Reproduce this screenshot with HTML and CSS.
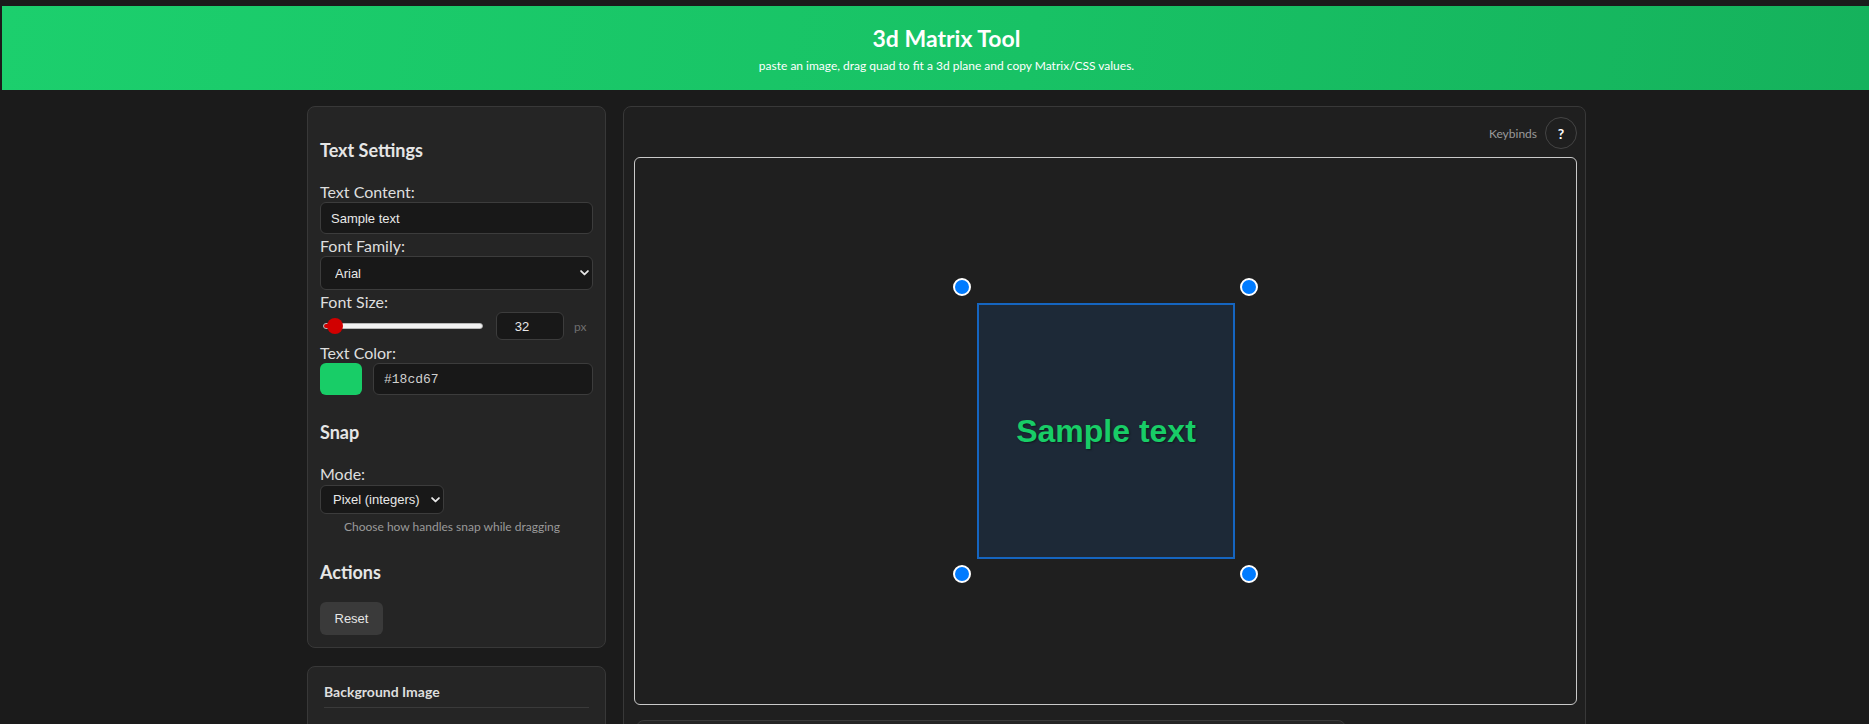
FILE: index.html
```html
<!DOCTYPE html>
<html lang="en">
<head>
<meta charset="utf-8">
<title>3d Matrix Tool</title>
<link rel="stylesheet" href="styles.css">
</head>
<body>
<header class="app-header">
  <h1 class="app-title">3d Matrix Tool</h1>
  <p class="app-subtitle">paste an image, drag quad to fit a 3d plane and copy Matrix/CSS values.</p>
</header>
<div class="layout-wrap">
  <main class="layout">
    <aside class="sidebar">
      <section class="panel settings">
        <h3 class="section-title first">Text Settings</h3>
        <label class="field-label" for="text-content">Text Content:</label>
        <input id="text-content" class="text-input" type="text" value="Sample text">

        <label class="field-label spaced" for="font-family">Font Family:</label>
        <div class="select-wrap full">
          <select id="font-family" class="select"><option>Arial</option></select>
          <svg class="chevron" viewBox="0 0 10 7" aria-hidden="true"><path d="M1.2 1.3 L5 5.1 L8.8 1.3" fill="none" stroke="#e6e6e6" stroke-width="2" stroke-linecap="round" stroke-linejoin="round"/></svg>
        </div>

        <label class="field-label spaced" for="font-size">Font Size:</label>
        <div class="size-row">
          <input id="font-size" class="range" type="range" min="10" max="1000" value="32">
          <input class="num-input" type="text" value="32">
          <span class="unit">px</span>
        </div>

        <label class="field-label spaced3" for="text-color">Text Color:</label>
        <div class="color-row">
          <span class="swatch"></span>
          <input id="text-color" class="text-input mono" type="text" value="#18cd67">
        </div>

        <h3 class="section-title">Snap</h3>
        <label class="field-label" for="snap-mode">Mode:</label>
        <div class="select-wrap compact">
          <select id="snap-mode" class="select"><option>Pixel (integers)</option></select>
          <svg class="chevron" viewBox="0 0 10 7" aria-hidden="true"><path d="M1.2 1.3 L5 5.1 L8.8 1.3" fill="none" stroke="#e6e6e6" stroke-width="2" stroke-linecap="round" stroke-linejoin="round"/></svg>
        </div>
        <p class="hint">Choose how handles snap while dragging</p>

        <h3 class="section-title actions-title">Actions</h3>
        <button class="btn" type="button">Reset</button>
      </section>

      <section class="panel bg-panel">
        <h4 class="sub-title">Background Image</h4>
      </section>
    </aside>

    <section class="workspace">
      <div class="toolbar">
        <span class="keybinds-label">Keybinds</span>
        <button class="help-btn" type="button">?</button>
      </div>
      <div class="stage">
        <div class="quad"><span class="quad-text">Sample text</span></div>
        <span class="handle h-tl"></span>
        <span class="handle h-tr"></span>
        <span class="handle h-bl"></span>
        <span class="handle h-br"></span>
      </div>
      <div class="output-panel"></div>
    </section>
  </main>
</div>
</body>
</html>
```

FILE: styles.css
```css
* { box-sizing: border-box; }

html { overflow: hidden; }

html, body { margin: 0; }

body {
  background: #1b1b1b;
  color: #dddddd;
  font-family: Lato, "Noto Sans", sans-serif;
}

/* Header */
.app-header {
  margin: 6px 0 0 2px;
  height: 84px;
  padding: 19px 0 0 22px;
  background: linear-gradient(100deg, #1ccf6d 0%, #18c265 55%, #15b25c 100%);
  color: #ffffff;
  text-align: center;
}

.app-title {
  margin: 0;
  font-size: 23px;
  line-height: 27px;
  font-weight: 700;
}

.app-subtitle {
  margin: 6px 0 0;
  font-size: 12px;
  line-height: 16px;
}

/* Layout */
.layout-wrap { padding-left: 24px; }

.layout {
  width: 1279px;
  margin: 16px auto 0;
  display: flex;
  align-items: flex-start;
  gap: 17px;
}

.sidebar {
  width: 299px;
  flex: none;
  display: flex;
  flex-direction: column;
  gap: 18px;
}

.panel {
  background: #252525;
  border: 1px solid #383838;
  border-radius: 8px;
}

.settings { padding: 12px; }

.section-title {
  margin: 26px 0 21px;
  font-size: 18px;
  line-height: 22px;
  font-weight: 700;
  color: #e6e6e6;
}

.section-title.first { margin-top: 20px; }
.section-title.actions-title { margin-bottom: 19px; }

.field-label {
  display: block;
  font-size: 16px;
  line-height: 20px;
  color: #dedede;
}

.field-label.spaced { margin-top: 2px; }
.field-label.spaced3 { margin-top: 3px; }

.text-input {
  display: block;
  width: 100%;
  height: 32px;
  margin: 0;
  padding: 0 10px;
  background: #181818;
  border: 1px solid #3c3c3c;
  border-radius: 6px;
  color: #e8e8e8;
  font: 13px "Liberation Sans", Arial, sans-serif;
  outline: none;
}

.text-input.mono {
  font-family: "Liberation Mono", "Courier New", monospace;
  color: #d0d0d0;
}

/* Selects */
.select-wrap { position: relative; }
.select-wrap.full { height: 34px; }
.select-wrap.compact { width: 124px; height: 29px; margin-top: 1px; }

.select {
  -webkit-appearance: none;
  appearance: none;
  display: block;
  width: 100%;
  height: 100%;
  margin: 0;
  padding: 0 26px 0 14px;
  background: #181818;
  border: 1px solid #3c3c3c;
  border-radius: 6px;
  color: #e8e8e8;
  font: 13px "Liberation Sans", Arial, sans-serif;
  outline: none;
}

.compact .select { padding: 0 16px 0 12px; }

.chevron {
  position: absolute;
  right: 4px;
  top: 50%;
  width: 9px;
  height: 7px;
  transform: translateY(-50%);
  pointer-events: none;
}

/* Font size row */
.size-row {
  display: flex;
  align-items: center;
  height: 28px;
}

.range {
  -webkit-appearance: none;
  appearance: none;
  width: 160px;
  height: 16px;
  margin: 0 0 0 3px;
  padding: 0;
  background: transparent;
}

.range::-webkit-slider-runnable-track {
  height: 6px;
  border-radius: 3px;
  border: 1px solid #b8b8b8;
  background: linear-gradient(to right, #d10000 0, #d10000 10px, #f2f2f2 10px, #f2f2f2 100%);
}

.range::-webkit-slider-thumb {
  -webkit-appearance: none;
  appearance: none;
  width: 16px;
  height: 16px;
  margin-top: -6px;
  border: none;
  border-radius: 50%;
  background: #d10000;
}

.num-input {
  width: 68px;
  height: 28px;
  margin: 0 0 0 13px;
  padding: 0 16px 0 0;
  background: #181818;
  border: 1px solid #3c3c3c;
  border-radius: 6px;
  color: #e8e8e8;
  font: 13px "Liberation Sans", Arial, sans-serif;
  text-align: center;
  outline: none;
}

.unit {
  margin-left: 10px;
  font-size: 12px;
  color: #6f6f6f;
}

/* Color row */
.color-row {
  display: flex;
  gap: 11px;
}

.swatch {
  flex: none;
  width: 42px;
  height: 32px;
  border-radius: 6px;
  background: #18cd67;
}

.color-row .text-input { flex: 1; width: auto; }

.hint {
  margin: 5px 0 0 24px;
  font-size: 12px;
  line-height: 16px;
  color: #9a9a9a;
}

.btn {
  display: block;
  height: 33px;
  margin: 0;
  padding: 0 14.5px;
  background: #3a3a3a;
  border: none;
  border-radius: 6px;
  color: #e6e6e6;
  font: 13px "Liberation Sans", Arial, sans-serif;
}

/* Background image panel */
.bg-panel {
  padding: 16px;
  height: 120px;
}

.sub-title {
  margin: 0;
  padding-bottom: 6px;
  border-bottom: 1px solid #3a3a3a;
  font-size: 14px;
  line-height: 18px;
  font-weight: 700;
  color: #dedede;
}

/* Workspace */
.workspace {
  width: 963px;
  flex: none;
  display: flex;
  flex-direction: column;
  padding: 10px 8px 10px 10px;
  background: #1f1f1f;
  border: 1px solid #383838;
  border-radius: 8px;
}

.toolbar {
  display: flex;
  justify-content: flex-end;
  align-items: center;
  gap: 8px;
  height: 32px;
}

.keybinds-label {
  font-size: 12px;
  color: #9a9a9a;
}

.help-btn {
  width: 32px;
  height: 32px;
  padding: 0;
  border: 1px solid #444444;
  border-radius: 50%;
  background: transparent;
  color: #ffffff;
  font: 700 14px Lato, "Noto Sans", sans-serif;
}

.stage {
  position: relative;
  margin-top: 8px;
  height: 548px;
  background: #1f1f1f;
  border: 1px solid #c9c9c9;
  border-radius: 6px;
}

.quad {
  position: absolute;
  left: 342px;
  top: 145px;
  width: 258px;
  height: 256px;
  display: flex;
  align-items: center;
  justify-content: center;
  background: #1d2937;
  border: 2px solid #1565c0;
}

.quad-text {
  font: 700 32px "Liberation Sans", Arial, sans-serif;
  color: #18cd67;
  text-shadow: 1px 1px 2px rgba(0, 0, 0, 0.45);
}

.handle {
  position: absolute;
  width: 18px;
  height: 18px;
  border-radius: 50%;
  background: #007bff;
  border: 2px solid #ffffff;
}

.h-tl { left: 318px; top: 120px; }
.h-tr { left: 605px; top: 120px; }
.h-bl { left: 318px; top: 407px; }
.h-br { left: 605px; top: 407px; }

.output-panel {
  width: 710px;
  height: 160px;
  margin: 15px 0 0 2px;
  background: #252525;
  border: 1px solid #3a3a3a;
  border-radius: 8px;
}
```
